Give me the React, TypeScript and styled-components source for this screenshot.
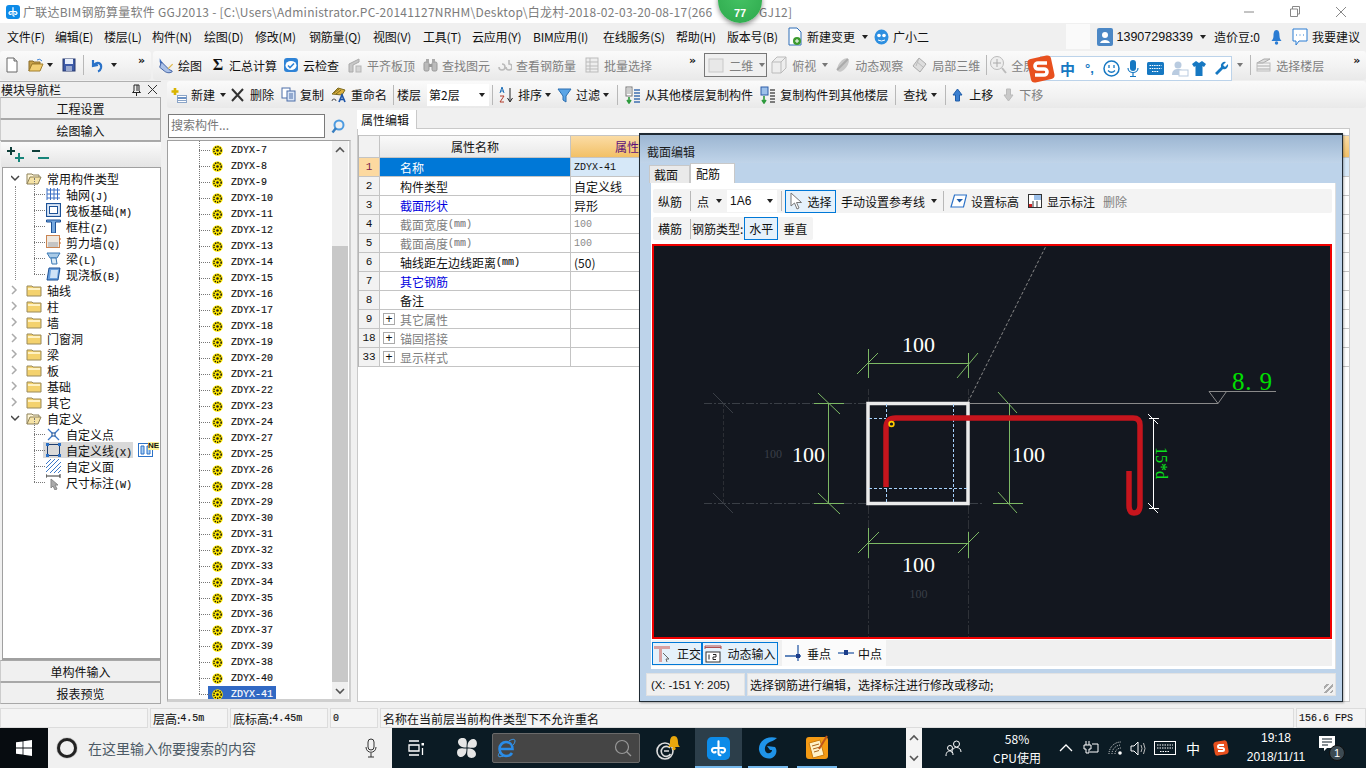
import React from "react";
import styled, { createGlobalStyle, css } from "styled-components";

const Global = createGlobalStyle`
  html, body { margin: 0; padding: 0; background: #f0f0f0; }
  * { box-sizing: border-box; }
  body { font-family: "Noto Sans CJK SC", "Liberation Sans", sans-serif; font-size: 12px; color: #111; }
`;

const CJK = `"Noto Sans CJK SC", "Liberation Sans", sans-serif`;
const MONO = `"Liberation Mono", "Noto Sans CJK SC", monospace`;

const Page = styled.div`
  position: relative; width: 1366px; height: 768px; overflow: hidden;
  display: flex; flex-direction: column; background: #f0f0f0;
`;

/* ---------- title bar ---------- */
const TitleBar = styled.div`
  height: 23px; flex: none; background: #fff; display: flex; align-items: center;
  padding-left: 6px; color: #7c7c7c; font-size: 12px; white-space: nowrap;
`;
const TitleText = styled.span` margin-left: 3px; width: 736px; flex: none; letter-spacing: 0.24px; `;
const TitleTail = styled.span` flex: 1; letter-spacing: 0.24px; `;
const WinControls = styled.div` display: flex; align-items: center; gap: 36px; padding-right: 20px; height: 100%; `;
const Badge = styled.div`
  position: absolute; left: 718px; top: -21px; width: 44px; height: 44px; border-radius: 50%;
  background: radial-gradient(circle at 50% 40%, #44c263, #2da84c); box-shadow: 0 2px 5px rgba(0,0,0,.45);
  color: #fff; font: bold 11px "Liberation Sans", sans-serif; display: flex; align-items: flex-end;
  justify-content: center; padding-bottom: 4px;
`;

/* ---------- menu ---------- */
const MenuBar = styled.div`
  height: 27px; flex: none; background: #f0f0f0; display: flex; align-items: center; padding-left: 7px; white-space: nowrap;
`;
const MenuItem = styled.span<{ $w: number }>` width: ${p => p.$w}px; flex: none; font-size: 12px; letter-spacing: -0.2px; `;
const MenuSpring = styled.div` flex: 1; `;
const WhitePatch = styled.div` width: 24px; height: 25px; background: #fafafa; margin-right: 7px; `;
const MenuRight = styled.div` display: flex; align-items: center; gap: 4px; padding-right: 6px; `;
const Phone = styled.span` font-family: "Liberation Sans", sans-serif; font-size: 12.5px; `;

/* ---------- generic tool strip pieces ---------- */
const Strip = styled.div`
  display: flex; align-items: center; white-space: nowrap; border-radius: 3px;
  background: linear-gradient(#fafafa, #f2f2f2 55%, #e9e9e9);
`;
const MainStrip = styled.div`
  height: 30px; flex: none; display: flex; align-items: center; white-space: nowrap; background: #f0f0f0;
`;
const Tool = styled.span<{ $ml?: number; $off?: boolean }>`
  display: inline-flex; align-items: center; gap: 4px; flex: none; font-size: 12px;
  margin-left: ${p => p.$ml ?? 0}px; color: ${p => (p.$off ? "#808080" : "#111")};
`;
const SigmaGlyph = styled.span` font: bold 16px "Liberation Serif", serif; color: #111; width: 14px; text-align: center; `;
const Sep = styled.i<{ $ml?: number; $h?: number }>`
  display: block; flex: none; width: 1px; height: ${p => p.$h ?? 20}px; background: #b8b8b8; margin-left: ${p => p.$ml ?? 0}px;
`;
const Arrow = styled.i<{ $ml?: number; $off?: boolean }>`
  display: block; flex: none; width: 0; height: 0; border: 3px solid transparent; border-top: 4px solid ${p => (p.$off ? "#777" : "#222")};
  border-bottom: 0; margin-left: ${p => p.$ml ?? 0}px;
`;
const Chevrons = styled.span<{ $ml?: number }>`
  flex: none; font: bold 11px "DejaVu Sans", sans-serif; margin-left: ${p => p.$ml ?? 0}px; margin-top: -10px;
`;
const GroupA = styled(Strip)` width: 151px; height: 29px; margin-right: 2px; padding-left: 5px; `;
const GroupB = styled(Strip)` flex: 1; height: 29px; padding-left: 4px; `;
const ComboBox = styled.div`
  width: 63px; height: 24px; margin-left: 8px; border: 1px solid #777; display: flex; align-items: center;
  padding-left: 3px; gap: 4px; color: #808080; flex: none; background: #f0f0f0;
`;

/* ---------- workspace ---------- */
const Workspace = styled.div` flex: 1; display: flex; min-height: 0; `;
const LeftPanel = styled.div` width: 163px; flex: none; display: flex; flex-direction: column; padding: 1px 2px 3px 0; `;
const NavHead = styled.div`
  height: 16px; flex: none; display: flex; align-items: center; border-top: 1px solid #b0b0b0; padding: 0 4px 0 1px; font-size: 12px;
`;
const NavTitle = styled.span` flex: 1; `;
const NavBtn = styled.div`
  height: 22px; flex: none; display: flex; align-items: center; justify-content: center; font-size: 12px;
  background: #f0f0f0; border: 1px solid #a8a8a8; border-left-color: #ccc;
`;
const TreeTools = styled.div`
  height: 26px; flex: none; padding-left: 6px; display: flex; align-items: center; gap: 6px;
  background: linear-gradient(#fbfbfb, #e4e4e4); border-top: 1px solid #aaa; margin-left: 1px;
`;
const Tree = styled.div`
  flex: 1; min-height: 0; margin-left: 2px; background: #fff; border: 1px solid #a0a0a0; border-bottom-width: 2px; padding-top: 2px; position: relative;
`;
const TreeRow = styled.div<{ $child?: boolean }>`
  position: relative; height: 16px; display: flex; align-items: center; white-space: nowrap; font-size: 12px;
  padding-left: ${p => (p.$child ? 43 : 8)}px; gap: 5px;
  ${p => p.$child && css`
    &::before { content: ""; position: absolute; left: 31px; top: -8px; height: 16px; width: 0; border-left: 1px dotted #777; }
    &::after { content: ""; position: absolute; left: 31px; top: 8px; width: 11px; border-top: 1px dotted #777; }
  `}
`;
const TreeLabel = styled.span` font-size: 12px; line-height: 16px; margin-top: 2px; `;
const Code = styled.span` font: 10px ${MONO}; -webkit-text-stroke: 0.15px currentColor; `;
const SelWrap = styled.span` display: flex; align-items: center; gap: 5px; background: #d9d9d9; margin-left: -3px; padding-left: 3px; padding-right: 1px; height: 16px; `;
const RootGuide = styled.i` position: absolute; left: 12px; top: 18px; height: 94px; width: 0; border-left: 1px dotted #888; `;
const Tag = styled.span`
  position: absolute; left: 145px; top: 0; font: bold 8px "Liberation Sans", sans-serif; color: #111; background: #fff59a; line-height: 8px;
`;

const RightArea = styled.div` flex: 1; min-width: 0; display: flex; flex-direction: column; padding-top: 1px; `;
const Toolstrip = styled(Strip)` height: 27px; flex: none; margin-left: 4px; padding-left: 4px; `;
const FloorSelect = styled.div`
  width: 62px; height: 22px; background: #fff; display: flex; align-items: center; justify-content: space-between;
  margin-left: 6px; padding: 0 4px 0 2px; flex: none;
`;
const Content = styled.div` flex: 1; min-height: 0; display: flex; `;
const ListColumn = styled.div` width: 189px; flex: none; display: flex; flex-direction: column; padding: 6px 3px 5px 2px; margin: 0 3px 0 2px; `;
const SearchRow = styled.div` height: 24px; flex: none; display: flex; padding-left: 1px; margin-bottom: 2px; `;
const SearchInput = styled.div`
  width: 157px; background: #fff; border: 1px solid #7a7a7a; color: #777; padding: 0 0 3px 2px; display: flex; align-items: center; font-size: 12px;
`;
const SearchBtn = styled.div` flex: 1; display: flex; align-items: center; justify-content: center; `;
const ListBox = styled.div`
  flex: 1; min-height: 0; background: #fff; border: 1px solid #a0a0a0; border-bottom: 3px solid #cfcfcf; border-right: 2px solid #cfcfcf; display: flex; overflow: hidden;
`;
const ListBody = styled.div` flex: 1; padding-top: 1px; `;
const ListRow = styled.div`
  position: relative; height: 16px; padding-left: 44px; display: flex; align-items: center;
  &::before { content: ""; position: absolute; left: 31px; top: -8px; height: 16px; border-left: 1px dotted #777; }
  &::after { content: ""; position: absolute; left: 31px; top: 8px; width: 11px; border-top: 1px dotted #777; }
`;
const ListItem = styled.span<{ $sel?: boolean }>`
  display: flex; align-items: center; height: 16px; gap: 8px; padding: 0 3px 0 4px; margin-left: -4px;
  font: 10px ${MONO}; -webkit-text-stroke: 0.15px currentColor;
  color: ${p => (p.$sel ? "#fff" : "#111")}; background: ${p => (p.$sel ? "#3169c4" : "transparent")};
`;
const ScrollBar = styled.div` width: 16px; flex: none; background: #f0f0f0; display: flex; flex-direction: column; align-items: center; margin-right: 1px; `;
const ScrollEnd = styled.div` height: 17px; flex: none; display: flex; align-items: center; justify-content: center; `;
const ScrollThumbGap = styled.div` height: 88px; flex: none; `;
const ScrollThumb = styled.div` flex: 1; width: 100%; background: #c8c8c8; `;

const PropColumn = styled.div` flex: 1; min-width: 0; display: flex; flex-direction: column; padding: 2px 16px 5px 0; `;
const PropTabs = styled.div` height: 19px; flex: none; display: flex; border-bottom: 1px solid #c9c9c9; `;
const PropTab = styled.div`
  width: 60px; background: #fff; border-right: 1px solid #c9c9c9; padding-left: 4px; font-size: 12px; display: flex; align-items: center;
  margin-bottom: -1px;
`;
const PropBody = styled.div` flex: 1; background: #fff; border: 1px solid #c9c9c9; border-top: 0; padding: 6px 0 0 0; `;
const PropTable = styled.div` border-left: 1px solid #b5b5b5; `;
const PropRow = styled.div<{ $head?: boolean }>`
  display: grid; grid-template-columns: 21px 191px 1fr; height: ${p => (p.$head ? 23 : 19)}px; border-bottom: 1px solid #c4c4c4;
  border-top: ${p => (p.$head ? "1px solid #c4c4c4" : "0")};
`;
const RowNo = styled.div<{ $cur?: boolean }>`
  display: flex; align-items: center; justify-content: center; border-right: 1px solid #c4c4c4;
  font: 11px ${MONO}; background: ${p => (p.$cur ? "#fcd9a0" : "#f2f2f2")}; color: ${p => (p.$cur ? "#7a1c4c" : "#111")};
`;
const NameCell = styled.div<{ $tone?: string; $sel?: boolean }>`
  display: flex; align-items: center; padding-left: 20px; border-right: 1px solid #c4c4c4; font-size: 12px; white-space: nowrap;
  color: ${p => (p.$sel ? "#fff" : p.$tone ?? "#111")}; background: ${p => (p.$sel ? "#0078d7" : "#fff")};
`;
const GroupCell = styled(NameCell)` padding-left: 3px; gap: 5px; `;
const PlusBox = styled.i`
  width: 12px; height: 12px; border: 1px solid #aaa; display: flex; align-items: center; justify-content: center; font: 12px "Liberation Sans", sans-serif; color: #111; font-style: normal;
`;
const ValueCell = styled.div<{ $cur?: boolean; $mono?: boolean; $dim?: boolean }>`
  display: flex; align-items: center; padding-left: 3px; font-size: ${p => (p.$mono ? 10 : 12)}px;
  font-family: ${p => (p.$mono ? MONO : CJK)}; color: ${p => (p.$dim ? "#8a8a8a" : "#111")};
  background: ${p => (p.$cur ? "#d6e8f8" : "#fff")};
`;
const HeadName = styled.div`
  display: flex; align-items: center; justify-content: center; border-right: 1px solid #c4c4c4; background: linear-gradient(#fafafa, #e8e8e8); font-size: 12px;
`;
const HeadValue = styled.div`
  display: flex; align-items: center; padding-left: 44px; background: linear-gradient(#fbdca5, #f2c066); color: #5b0f7a; white-space: nowrap; overflow: hidden;
`;
const HeadCorner = styled.div` background: #f2f2f2; border-right: 1px solid #c4c4c4; `;

/* ---------- status ---------- */
const StatusBar = styled.div` height: 21px; flex: none; display: flex; gap: 2px; padding-top: 1px; background: #f0f0f0; `;
const StatusCell = styled.div<{ $w?: number; $fill?: boolean }>`
  ${p => (p.$fill ? "flex: 1;" : `width: ${p.$w}px; flex: none;`)}
  background: #f4f4f4; border: 1px solid #dcdcdc; display: flex; align-items: center; padding-left: 2px; white-space: nowrap; font-size: 12px;
`;

/* ---------- taskbar ---------- */
const Taskbar = styled.div` height: 40px; flex: none; display: flex; align-items: center; background: #0b1b24; color: #fff; position: relative; `;
const StartBtn = styled.div` width: 48px; height: 100%; background: #070c10; display: flex; align-items: center; justify-content: center; flex: none; `;
const TaskSearch = styled.div`
  width: 344px; height: 100%; flex: none; background: #f0f0f0; display: flex; align-items: center; padding-left: 9px; color: #444; font-size: 14px;
`;
const Cortana = styled.i` width: 20px; height: 20px; border-radius: 50%; border: 3px solid #222; flex: none; box-shadow: 0 0 1px #000; `;
const TaskSearchText = styled.span` margin-left: 11px; flex: 1; color: #4c5a66; `;
const MicWrap = styled.span` margin-right: 15px; display: flex; `;
const TaskIconSlot = styled.div<{ $w: number; $ml?: number; $act?: boolean; $bar?: boolean }>`
  position: relative; width: ${p => p.$w}px; margin-left: ${p => p.$ml ?? 0}px; height: 100%; flex: none; display: flex; align-items: center; justify-content: center;
  background: ${p => (p.$act ? "#2c3e4a" : "transparent")};
  ${p => p.$bar && css`&::after { content: ""; position: absolute; left: 0; right: 0; bottom: 0; height: 2px; background: #76b9ed; }`}
`;
const IeBox = styled.div`
  width: 148px; height: 30px; margin-left: 1px; flex: none; background: #454545; border: 1px solid #6a6a6a; border-radius: 2px; display: flex; align-items: center; justify-content: space-between; padding: 0 7px 0 3px;
`;
const ScrollTiles = styled.div` width: 16px; height: 100%; background: #f4f4f4; display: flex; flex-direction: column; align-items: center; justify-content: space-around; margin-left: 69px; flex: none; `;
const CpuBlock = styled.div` width: 84px; margin-left: 12px; flex: none; text-align: center; font-size: 12px; line-height: 19px; color: #fff; `;
const TrayText = styled.span<{ $ml?: number }>` margin-left: ${p => p.$ml ?? 0}px; font-size: 14px; flex: none; `;
const Clock = styled.div` width: 76px; margin-left: 9px; flex: none; text-align: center; font: 12px/19px "Liberation Sans", sans-serif; `;
const NotifyWrap = styled.div` position: relative; margin-left: 5px; flex: none; width: 28px; height: 24px; `;
const NotifyBadge = styled.span`
  position: absolute; left: 10px; top: 9px; width: 16px; height: 16px; border-radius: 50%; background: #3c4a52; border: 1px solid #111; color: #fff; font: 11px/14px "Liberation Sans", sans-serif; text-align: center;
`;

/* ---------- IME ---------- */
const ImeBar = styled.div`
  position: absolute; left: 1040px; top: 56px; width: 192px; height: 25px; background: #fff; border: 1px solid #bcd3ea; display: flex; align-items: center; padding-left: 19px;
`;
const ImeLogo = styled.div` position: absolute; left: -14px; top: -2px; width: 28px; height: 28px; `;
const ImeZh = styled.span` font-weight: 700; font-size: 15px; color: #1678c2; width: 25px; flex: none; `;
const ImeDots = styled.span` font: bold 13px "Liberation Sans", sans-serif; color: #1678c2; width: 18px; flex: none; `;
const ImeSlot = styled.span<{ $w: number }>` width: ${p => p.$w}px; flex: none; display: flex; `;

/* ---------- dialog ---------- */
const Dialog = styled.div`
  position: absolute; left: 639px; top: 133px; width: 704px; height: 569px; background: #bdd3ea; border: 1px solid #1f2a33; border-top-width: 2px;
  box-shadow: 1px 1px 2px rgba(0,0,0,.3); display: flex; flex-direction: column;
`;
const DialogTitle = styled.div`
  height: 28px; flex: none; background: linear-gradient(#9cb6d2, #c0d4e9); padding: 8px 0 0 7px; font-size: 12px; color: #1c1c1c;
`;
const TabRow = styled.div` height: 20px; flex: none; display: flex; align-items: flex-end; padding-left: 9px; `;
const DlgTab = styled.div<{ $on?: boolean }>`
  height: ${p => (p.$on ? 20 : 18)}px; width: ${p => (p.$on ? 45 : 41)}px; background: ${p => (p.$on ? "#fff" : "#eaeaea")};
  border: 1px solid #c8c8c8; border-bottom: 0; display: flex; align-items: center; padding-left: ${p => (p.$on ? 5 : 4)}px; font-size: 12px;
`;
const DlgPanel = styled.div`
  height: 486px; flex: none; margin: 0 6px 0 11px; background: #fff; padding: 6px 3px 0 1px; border-right: 1px solid #ddd; display: flex; flex-direction: column;
`;
const DlgTools = styled.div<{ $w?: number }>`
  height: 24px; flex: none; display: flex; align-items: center; white-space: nowrap; background: #f3f3f3; padding-left: 5px; margin-left: 1px; border-radius: 2px;
  ${p => p.$w && `width: ${p.$w}px;`}
`;
const DlgTools2 = styled(DlgTools)` height: 23px; margin-top: 4px; `;
const BlueBtn = styled.span<{ $w?: number; $ml?: number }>`
  display: inline-flex; align-items: center; justify-content: center; gap: 5px; height: 23px; flex: none; border: 1px solid #0078d7; background: #e5f1fb;
  width: ${p => p.$w ?? 34}px; margin-left: ${p => p.$ml ?? 0}px; font-size: 12px;
`;
const MiniSelect = styled.div`
  width: 50px; height: 22px; background: #fff; display: flex; align-items: center; justify-content: space-between; flex: none; margin-left: 5px; padding: 0 4px 0 3px;
  font: 12px "Liberation Sans", sans-serif;
`;
const Canvas = styled.svg` display: block; flex: none; width: 680px; height: 395px; margin-top: 4px; `;
const SnapRow = styled.div` height: 26px; flex: none; margin-top: 1px; display: flex; align-items: center; background: #f0f0f0; `;
const SnapGroup = styled.div` height: 26px; display: flex; align-items: center; background: #fbfbfb; margin-left: 4px; padding: 0 4px 0 3px; gap: 7px; `;
const DlgStatus = styled.div` height: 23px; flex: none; margin: 4px 6px 0 6px; display: flex; gap: 2px; `;
const DlgStatusCell = styled.div<{ $w?: number; $grip?: boolean }>`
  ${p => (p.$w ? `width: ${p.$w}px; flex: none;` : "flex: 1;")}
  position: relative; background: #f0f0f0; border: 1px solid #e2e2e2; display: flex; align-items: center; padding-left: 2px; font-size: 12px; white-space: nowrap;
  ${p => p.$grip && css`
    &::after { content: ""; position: absolute; right: 2px; bottom: 2px; width: 9px; height: 9px;
      background: repeating-linear-gradient(135deg, transparent 0 2px, #aaa 2px 4px); }
  `}
`;
const Coord = styled.span` font: 11.5px "Liberation Sans", sans-serif; letter-spacing: -0.1px; margin-left: 2px; `;
const CanvasWhite = styled.text` fill: #fff; font: 22px "Liberation Serif", serif; text-anchor: middle; `;
const CanvasFaint = styled.text` fill: #3a3f48; font: 12px "Liberation Serif", serif; text-anchor: middle; `;
const CanvasGreen = styled.text` fill: #00e000; font: 25px "Liberation Serif", serif; `;
const CanvasGreenSm = styled.text` fill: #0be01c; font: 16px "Liberation Serif", serif; text-anchor: middle; `;

/* ---------- icons ---------- */
const Svg = ({ w = 16, h = 16, vb, children }: { w?: number; h?: number; vb?: string; children: React.ReactNode }) => (
  <svg width={w} height={h} viewBox={vb ?? `0 0 ${w} ${h}`} style={{ flex: "none", display: "block" }}>{children}</svg>
);

const AppLogo = ({ s = 14 }: { s?: number }) => (
  <Svg w={s} h={s} vb="0 0 24 24">
    <rect width="24" height="24" rx="5" fill="#0d8be8" />
    <path d="M12 4.500V17a2 2 0 0 0 2 2M12 11.500H7.500a2.300 2.300 0 1 0 1.500 4M12 11.500h4.500a2.300 2.300 0 1 1-1.500 4" fill="none" stroke="#fff" strokeWidth="2.200" strokeLinecap="round" />
  </Svg>
);
const FileNew = () => (<Svg w={14} h={16}><path d="M2 1h7l3 3v11H2z" fill="#fff" stroke="#666" /><path d="M9 1v3h3" fill="#ddd" stroke="#666" /></Svg>);
const FolderOpenIc = () => (<Svg w={16} h={16}><path d="M1 14V4h4l1 1h6v2H4l-3 7z" fill="#c9a24a" stroke="#8a6d2a" /><path d="M1 14l3-7h11l-3 7z" fill="#f2cf73" stroke="#a27f2c" /><path d="M9 3q3-2 5 1" fill="none" stroke="#3b7fd0" /></Svg>);
const SaveIc = () => (<Svg w={14} h={16}><rect x="1" y="2" width="12" height="12" fill="#3d5aa8" stroke="#26386e" /><rect x="3" y="2" width="8" height="5" fill="#e7eefb" /><rect x="4" y="9" width="6" height="5" fill="#9aa9cf" /></Svg>);
const UndoIc = () => (<Svg w={14} h={16}><path d="M3 3v6l5-1M4 8c3-4 8-2 7 3-.4 1.600-1.500 3-3 3.500" fill="none" stroke="#2a72c8" strokeWidth="2.200" /></Svg>);
const DrawIc = () => (<Svg w={17} h={19} vb="0 0 19 20"><path d="M3 2l5 8-2 3-3-7z" fill="#3b6fc4" /><path d="M5 6l8 8c2 2 4 1 4 3-3 2-7 1-9-1L3 12z" fill="#a9c0e8" stroke="#33569c" /><path d="M12 13l5-5 1 1-5 5z" fill="#e0b84a" /></Svg>);
const CloudCheck = () => (<Svg w={16} h={16}><rect x="1" y="1" width="14" height="14" rx="3" fill="#2f83d6" /><ellipse cx="8" cy="8.500" rx="5.500" ry="4.500" fill="#fff" /><path d="M5 8.500l2 2 4-4" fill="none" stroke="#2f83d6" strokeWidth="1.600" /></Svg>);
const AlignIc = () => (<Svg w={16} h={18}><path d="M2 16V8l10-5v3l-6 3v7z" fill="#c7c7c7" stroke="#aaa" /><rect x="9" y="10" width="5" height="6" fill="#d5d5d5" stroke="#b5b5b5" /></Svg>);
const BinocIc = () => (<Svg w={15} h={16}><rect x="1" y="5" width="5" height="9" rx="1.500" fill="#bbb" stroke="#999" /><rect x="9" y="5" width="5" height="9" rx="1.500" fill="#bbb" stroke="#999" /><rect x="3" y="2" width="3" height="4" fill="#aaa" /><rect x="9" y="2" width="3" height="4" fill="#aaa" /><rect x="6" y="7" width="3" height="3" fill="#999" /></Svg>);
const RebarLook = () => (<Svg w={15} h={14}><path d="M2 9a3 3 0 1 0 3-3M9 9a3 3 0 1 0 3-3V2" fill="none" stroke="#bbb" strokeWidth="1.600" /></Svg>);
const BatchIc = () => (<Svg w={16} h={18}><rect x="2" y="2" width="12" height="14" fill="#eee" stroke="#bbb" /><path d="M2 6h12M2 10h12M2 13h12M6 2v14" stroke="#bbb" /></Svg>);
const BoxFlat = () => (<Svg w={17} h={17}><rect x="1" y="2" width="14" height="13" fill="#e8e8e8" stroke="#c8c8c8" /></Svg>);
const CubeIc = () => (<Svg w={18} h={20}><path d="M2 7l5-5h9v11l-5 5H2z" fill="#eee" stroke="#bbb" /><path d="M2 7h9v11M11 7l5-5" fill="none" stroke="#bbb" /></Svg>);
const OrbitIc = () => (<Svg w={17} h={18}><ellipse cx="9" cy="9" rx="4" ry="8" fill="#c8c8c8" transform="rotate(38 9 9)" /><path d="M3 14L14 3" stroke="#aaa" strokeWidth="2" /></Svg>);
const Local3d = () => (<Svg w={17} h={17}><path d="M8 1l7 6-6 8-7-6z" fill="#ddd" stroke="#aaa" /><path d="M5 4l7 6M8 1L5 9" stroke="#bbb" /></Svg>);
const ZoomAll = () => (<Svg w={18} h={20}><circle cx="8" cy="8" r="6.500" fill="#eee" stroke="#bbb" /><path d="M8 4v8M4 8h8" stroke="#aaa" /><path d="M13 13l4 5" stroke="#bbb" strokeWidth="2" /></Svg>);
const FloorPick = () => (<Svg w={16} h={16}><path d="M1 6l7-4h6L7 6zM1 9h13M1 12h13" fill="#ddd" stroke="#aaa" /><rect x="1" y="6" width="13" height="8" fill="none" stroke="#bbb" /></Svg>);
const NewIc = () => (<Svg w={16} h={16}><path d="M4 1v7M.5 4.500h7" stroke="#d9b400" strokeWidth="2.600" /><rect x="6.500" y="8.500" width="9" height="7" fill="#fff" stroke="#8ba5c8" /><path d="M6.500 11h9" stroke="#6d92c4" strokeWidth="2" /><path d="M6.500 13.500h9" stroke="#8ba5c8" /></Svg>);
const DelX = () => (<Svg w={13} h={14}><path d="M1 1l11 12M12 1L1 13" stroke="#333" strokeWidth="2" /></Svg>);
const CopyIc = () => (<Svg w={15} h={15}><rect x="1" y="1" width="8" height="10" fill="#fff" stroke="#4d6ea8" /><rect x="6" y="4" width="8" height="10" fill="#d8e4f6" stroke="#4d6ea8" /><path d="M8 7h4M8 9h4M8 11h4" stroke="#4d6ea8" /></Svg>);
const RenameIc = () => (<Svg w={17} h={17}><path d="M2 8l6-6 7 2-3 5z" fill="#dcb03a" stroke="#7c6a20" /><path d="M4 7l5-4M6 8l5-4" stroke="#7c6a20" /><path d="M9 16l3-7 3 7M10 13.500h4" fill="none" stroke="#1e55a8" strokeWidth="1.700" /><path d="M2 15a2 2 0 1 1 4 0" fill="none" stroke="#555" /></Svg>);
const SortIc = () => (<Svg w={16} h={18}><path d="M2 7l2-6 2 6M2.800 5h2.400" fill="none" stroke="#1d6fb8" /><path d="M2 10h4l-4 6h4" fill="none" stroke="#b23b2a" /><path d="M12 2v13M9.500 12l2.500 4 2.500-4" fill="none" stroke="#222" /></Svg>);
const FilterIc = () => (<Svg w={15} h={16}><path d="M1 2h13L9 9v6l-3-2V9z" fill="#5ba5e6" stroke="#2c6fb0" /></Svg>);
const FloorCopy = () => (<Svg w={16} h={18}><rect x="1" y="1" width="6" height="9" fill="#fff" stroke="#777" /><path d="M2 3h4M2 5h4M2 7h4" stroke="#999" /><path d="M4 11v5M2 14l2 3 2-3" fill="none" stroke="#2d9a3c" strokeWidth="1.600" /><path d="M9 4h6M9 7h6M9 10h6M9 13h6M9 16h6" stroke="#3f6fb0" strokeWidth="1.500" /></Svg>);
const FloorCopy2 = () => (<Svg w={16} h={18}><rect x="1" y="1" width="7" height="8" fill="#9cc0ea" stroke="#2c5ca8" /><path d="M4 10v6M2 14l2 3 2-3" fill="none" stroke="#2d9a3c" strokeWidth="1.600" /><path d="M10 4h5M10 7h5M10 10h5M10 13h5M10 16h5" stroke="#555" strokeWidth="1.500" /></Svg>);
const UpIc = () => (<Svg w={11} h={14}><path d="M5.500 1L10 7H7.500v6h-4V7H1z" fill="#3b7fd0" stroke="#1f5ca8" /></Svg>);
const DownIc = () => (<Svg w={11} h={14}><path d="M5.500 13L10 7H7.500V1h-4v6H1z" fill="#c9c9c9" stroke="#bbb" /></Svg>);
const NewChange = () => (<Svg w={16} h={20}><path d="M2 1h8l4 4v13H2z" fill="#fff" stroke="#2f6fb8" /><circle cx="10" cy="14" r="4" fill="#3d9a2e" /><path d="M10 12v4M8 14h4" stroke="#fff" /></Svg>);
const Mascot = () => (<Svg w={15} h={16}><ellipse cx="7.500" cy="8" rx="7" ry="7.500" fill="#2d8fe0" /><circle cx="5" cy="6.500" r="1.800" fill="#fff" /><circle cx="10" cy="6.500" r="1.800" fill="#fff" /><path d="M4 11q3.500 2 7 0" fill="none" stroke="#fff" /></Svg>);
const Avatar = () => (<Svg w={16} h={18}><rect width="16" height="18" rx="2" fill="#4b87c5" /><circle cx="8" cy="7" r="3" fill="#fff" /><path d="M3 15c1-4 9-4 10 0z" fill="#fff" /></Svg>);
const BellIc = ({ c = "#2b7cd3" }: { c?: string }) => (<Svg w={11} h={16}><path d="M5.500 1C3 1 2.500 4 2.500 7S1 11 .5 12h10C10 11 8.500 10 8.500 7S8 1 5.500 1z" fill={c} /><circle cx="5.500" cy="14" r="1.700" fill={c} /></Svg>);
const Suggest = () => (<Svg w={16} h={18}><path d="M1 1h14v12H7l-3 4v-4H1z" fill="#fff" stroke="#2b7cd3" /><path d="M4 7h1M7.500 7h1M11 7h1" stroke="#2b7cd3" /></Svg>);
const Pin = () => (<Svg w={11} h={12}><path d="M3 1h5v6l1.500 1.500h-8L3 7zM5.500 8v4M6 1v6" fill="none" stroke="#222" /></Svg>);
const CloseSm = () => (<Svg w={9} h={9}><path d="M0 0l9 9M9 0L0 9" stroke="#333" /></Svg>);
const ExpandAll = () => (<Svg w={19} h={18}><path d="M4 1v8M0 5h8" stroke="#0f3f3a" strokeWidth="2" /><path d="M12 7v9M8 12h9" stroke="#17857a" strokeWidth="2" /></Svg>);
const CollapseAll = () => (<Svg w={19} h={14}><path d="M0 3h8" stroke="#0f3f3a" strokeWidth="2" /><path d="M6 10h11" stroke="#17857a" strokeWidth="2" /></Svg>);
const Chev = ({ open }: { open?: boolean }) => (<Svg w={10} h={10}>{open ? <path d="M0 3l4 4 4-4" fill="none" stroke="#444" strokeWidth="1.500" /> : <path d="M1 1l4 4-4 4" fill="none" stroke="#aaa" strokeWidth="1.500" />}</Svg>);
const FolderIc = ({ open }: { open?: boolean }) => open ? (
  <Svg w={16} h={13}><path d="M1 12V2h5l1 1h6v2" fill="#fff6d8" stroke="#8e8158" /><path d="M1 12l3-7h11l-3 7z" fill="#f6e3a6" stroke="#8e8158" /></Svg>
) : (
  <Svg w={16} h={13}><path d="M1 12V2h5l1 1h8v9z" fill="#f4d26e" stroke="#9a8a5a" /><rect x="2" y="4" width="12" height="2" fill="#fff2c4" /></Svg>
);
const GridIc = () => (<Svg w={15} h={14}><path d="M1 1v12M4.500 1v12M8 1v12M11.500 1v12M1 3h13M1 7h13M1 11h13" stroke="#3b6fc4" fill="none" /></Svg>);
const RaftIc = () => (<Svg w={15} h={14}><rect x=".5" y=".5" width="14" height="13" fill="#dbe7f7" stroke="#1c5196" strokeWidth="1.200" /><rect x="3.500" y="3.500" width="8" height="7" fill="#fff" stroke="#1c5196" /></Svg>);
const ColumnIc = () => (<Svg w={15} h={14}><path d="M.5 1h14v2H9.500v11h-4V3H.5z" fill="#76a8de" stroke="#1c5196" /></Svg>);
const WallIc = () => (<Svg w={15} h={14}><rect x=".5" y=".5" width="13" height="12" fill="#efe8df" stroke="#c98452" /><rect x="2" y="7" width="10" height="5" fill="#c4c4c4" /><path d="M13 4h2M13 8h2" stroke="#d0661c" /></Svg>);
const BeamIc = () => (<Svg w={15} h={14}><path d="M1 2h13l-3 5h-7z" fill="#a9cbe8" stroke="#3b78b4" /><path d="M5 7h5l1 6H6z" fill="#d9eaf7" stroke="#3b78b4" /></Svg>);
const SlabIc = () => (<Svg w={15} h={14}><path d="M3 1h11l-2 12H1z" fill="#6aa0de" stroke="#1c5196" /><path d="M5 3h7l-1 8H4z" fill="#cfe2f7" /></Svg>);
const PointIc = () => (<Svg w={15} h={13}><path d="M2 1l11 11M13 1L2 12" stroke="#3b78c8" strokeWidth="1.300" /><rect x="6" y="5" width="3" height="3" fill="#fff" stroke="#1c5196" /></Svg>);
const LineIc = () => (<Svg w={15} h={14}><rect x="1.500" y="1.500" width="12" height="11" fill="none" stroke="#1f3e70" /><path d="M0 0h3v3H0zM12 0h3v3h-3zM0 11h3v3H0zM12 11h3v3h-3z" fill="#2d73c8" /></Svg>);
const AreaIc = () => (<Svg w={15} h={14}><path d="M0 5l5-5M0 9l9-9M0 13L13 0M4 14L15 3M8 14l7-7M12 14l3-3" stroke="#3b78c8" /></Svg>);
const DimIc = () => (<Svg w={15} h={16}><path d="M0 2h14M0 0v4M14 0v4" stroke="#333" /><path d="M5 5l7 6-3 0 2 4-2 1-2-4-2 2z" fill="#aaa" stroke="#888" /></Svg>);
const Layout3 = () => (<Svg w={15} h={14}><rect x=".5" y=".5" width="14" height="13" fill="#fff" stroke="#2d73c8" /><path d="M3 3h3v8H3zM9 3h3v8H9z" fill="#a8cdf2" stroke="#2d73c8" /></Svg>);
const GearDot = () => (
  <Svg w={11} h={11} vb="0 0 12 12">
    <circle cx="6" cy="6" r="5.800" fill="#ffe800" />
    <circle cx="6" cy="6" r="4" fill="none" stroke="#111" strokeWidth="1.600" strokeDasharray="1.500 1.100" />
    <circle cx="6" cy="6" r="1.400" fill="#222" />
  </Svg>
);
const SearchIc = () => (<Svg w={14} h={15}><circle cx="8" cy="6" r="4.500" fill="none" stroke="#4d9be0" strokeWidth="2" /><path d="M5 9L1.500 13.500" stroke="#3a7fc0" strokeWidth="2.400" /></Svg>);
const UpChev = () => (<Svg w={10} h={8}><path d="M1 6l4-4 4 4" fill="none" stroke="#555" strokeWidth="1.600" /></Svg>);
const DownChev = () => (<Svg w={10} h={8}><path d="M1 2l4 4 4-4" fill="none" stroke="#555" strokeWidth="1.600" /></Svg>);
const PointerIc = () => (<Svg w={13} h={18}><path d="M1 1l0 13 3.500-3 2.500 6 2-1-2.500-5.500 5 0z" fill="#fff" stroke="#777" /></Svg>);
const ElevIc = () => (<Svg w={17} h={16}><path d="M4.500 2h12l-3 12H1z" fill="#fff" stroke="#2d73c8" strokeWidth="1.200" /><path d="M6.500 6h6.500l-3.500 3.500z" fill="#1f5ca8" /></Svg>);
const ShowDim = () => (<Svg w={16} h={16}><rect x="1.500" y="1.500" width="13" height="13" fill="#fff" stroke="#333" /><rect x="7" y="2" width="7" height="5" fill="#9cc0ea" /><path d="M6 8v6M10 8v6" stroke="#333" /><rect x="2" y="11" width="3" height="3" fill="#d02020" /></Svg>);
const OrthoIc = () => (<Svg w={19} h={19}><path d="M1 2h16v3H1zM6 5h3v13H6z" fill="#d9a0a0" /><path d="M10 9l6 6-3 0 1 3" fill="none" stroke="#666" /></Svg>);
const DynIc = () => (<Svg w={18} h={19}><path d="M1 5V2h16v3M1 3.500h16" fill="none" stroke="#b05050" /><rect x="2" y="8" width="14" height="10" fill="#fff" stroke="#333" /><path d="M5 10.500v5M9 10.500h3v2.500h-3v2.500h3" fill="none" stroke="#222" /></Svg>);
const PerpIc = () => (<Svg w={18} h={18}><path d="M0 12h16M13 1v16" stroke="#2d5fa8" strokeWidth="1.300" /><rect x="11" y="10" width="4" height="4" fill="#1c3d8a" /></Svg>);
const MidIc = () => (<Svg w={16} h={8}><path d="M0 4h16" stroke="#2d5fa8" strokeWidth="1.300" /><rect x="6" y="1" width="4" height="5" fill="#1c3d8a" /></Svg>);
const WinLogo = () => (<Svg w={16} h={16}><path d="M0 2.300L6.600 1.400V7.500H0zM7.400 1.300L16 0V7.500H7.400zM0 8.400H6.600V14.600L0 13.700zM7.400 8.400H16V16L7.400 14.700z" fill="#fff" /></Svg>);
const MicIc = () => (<Svg w={12} h={20}><rect x="3" y="1" width="6" height="11" rx="3" fill="none" stroke="#333" /><path d="M1 9c0 7 10 7 10 0M6 15v4M3 19h6" fill="none" stroke="#333" /></Svg>);
const TaskView = () => (<Svg w={16} h={16}><path d="M1 1h10M1 15h10M1 5h10v6H1z" fill="none" stroke="#fff" strokeWidth="1.300" /><rect x="13.500" y="3" width="2.500" height="2.500" fill="#fff" /><path d="M14.500 8v7" stroke="#fff" strokeWidth="1.300" /></Svg>);
const Petal = ({ r }: { r: number }) => (<path transform={`rotate(${r} 11 11)`} d="M10.500 10.500C10.500 7 11.500 5 10 2.500 8.500 .5 4 .5 2.500 3S3 9 6 10c2 .6 3.500.5 4.500.5z" fill="#e6e6e6" />);
const FanIc = () => (<Svg w={22} h={22}><Petal r={0} /><Petal r={90} /><Petal r={180} /><Petal r={270} /></Svg>);
const IeIc = () => (<Svg w={20} h={20}><path d="M3.500 11h13c0-4.500-3-7-6.500-7S3.500 7 3.500 11s3 7 6.500 7c3 0 5-1.200 6-3" fill="none" stroke="#2a8ce8" strokeWidth="2.600" /><path d="M4 14C1 18 2 20 7 18M13 3c3-2 6-2.500 6 0 0 1.500-1 3-2 4" fill="none" stroke="#3b9cf0" /></Svg>);
const MagnGray = () => (<Svg w={18} h={18}><circle cx="8" cy="8" r="6.500" fill="none" stroke="#999" strokeWidth="1.200" /><path d="M12.500 12.500L17 17" stroke="#999" strokeWidth="1.300" /></Svg>);
const SwirlIc = () => (<Svg w={30} h={28}><circle cx="10" cy="17" r="8" fill="none" stroke="#ddd" strokeWidth="1.600" /><path d="M15 14a5 5 0 1 0 .5 6M14 17H9" fill="none" stroke="#ddd" strokeWidth="1.600" /><path d="M19 2c-3 0-4 3-4 6s-1 4-2 5h12c-1-1-2-2-2-5s-1-6-4-6z" fill="#e8a70c" /><circle cx="19" cy="14.500" r="1.700" fill="#e8a70c" /></Svg>);
const GIcon = () => (<Svg w={24} h={26}><path d="M21 3C10 0 2 7 3 15c1 6 7 10 13 8 4-2 6-7 3-11l-8-1 3 4h2c0 2-2 4-5 3-3-2-3-7 1-10 3-2 6-2 9-5z" fill="#1f93e8" /></Svg>);
const NoteIc = () => (<Svg w={24} h={26}><rect x="1" y="2" width="22" height="22" rx="3" fill="#f49a14" /><path d="M4 8l11-3 4 15-11 3z" fill="#fff2c8" stroke="#c97b0c" /><path d="M7 11l7-2M8 14l7-2M9 17l5-1.500" stroke="#a9641a" /><path d="M14 14L22 1" stroke="#c0561a" strokeWidth="2" /></Svg>);
const PeopleIc = () => (<Svg w={17} h={18}><circle cx="11.500" cy="5" r="3" fill="none" stroke="#fff" /><path d="M7 14c0-4 2-5.500 4.500-5.500S16 10 16 13" fill="none" stroke="#fff" /><circle cx="5" cy="9" r="2.500" fill="none" stroke="#fff" /><path d="M1 17c0-4 2-5 4-5s3 1 3 4" fill="none" stroke="#fff" /></Svg>);
const Caret = () => (<Svg w={14} h={10}><path d="M1 8l6-6 6 6" fill="none" stroke="#fff" strokeWidth="1.300" /></Svg>);
const BatIc = () => (<Svg w={16} h={14}><path d="M3 0v4M6 0v4M1 4h7v4H6v4H3V8H1zM9 3h6v8H7" fill="none" stroke="#fff" /></Svg>);
const WifiIc = () => (<Svg w={15} h={15}><path d="M1 13a12 12 0 0 1 12-12M4 13a9 9 0 0 1 9-9M7 13a6 6 0 0 1 6-6" fill="none" stroke="#ddd" strokeDasharray="1 1" /><circle cx="12" cy="12" r="1.800" fill="#fff" /></Svg>);
const SpeakerIc = () => (<Svg w={16} h={15}><path d="M1 5h3l4-4v13l-4-4H1z" fill="none" stroke="#fff" /><path d="M11 4q2 3.500 0 7M13.500 2q3 5.500 0 11" fill="none" stroke="#bbb" /></Svg>);
const KbdIc = () => (<Svg w={22} h={16}><rect x=".5" y="1.500" width="21" height="13" fill="none" stroke="#fff" /><path d="M3 5h16M3 8h16M6 11.500h10" stroke="#fff" strokeDasharray="1.500 1" /></Svg>);
const SougouSm = () => (<Svg w={16} h={16}><rect x="1" y="1" width="14" height="14" rx="3" fill="#e8501e" transform="rotate(-10 8 8)" /><path d="M11 5H6.500a1.500 1.500 0 0 0 0 3h3a1.500 1.500 0 0 1 0 3H5" fill="none" stroke="#fff" strokeWidth="2" /></Svg>);
const NotifyIc = () => (<Svg w={16} h={16}><path d="M0 0h16v12H8l-3 3v-3H0z" fill="#fff" /><path d="M3 3h10M3 6h10M3 9h6" stroke="#0b1b24" /></Svg>);

const SmileIc = () => (<Svg w={17} h={17}><circle cx="8.500" cy="8.500" r="7.500" fill="none" stroke="#1678c2" strokeWidth="1.500" /><path d="M6 5v3M11 5v3M5 10.500q3.500 3.500 7 0" fill="none" stroke="#1678c2" strokeWidth="1.300" /></Svg>);
const ImeMic = () => (<Svg w={12} h={17}><rect x="3" y="0" width="6" height="11" rx="3" fill="#1678c2" /><path d="M1 8c0 6 10 6 10 0M6 13v3M3 16.500h6" fill="none" stroke="#1678c2" strokeWidth="1.200" /></Svg>);
const ImeKbd = () => (<Svg w={17} h={15}><rect x="0" y="1" width="17" height="13" rx="1.500" fill="#1678c2" /><path d="M2.500 4.500h12M2.500 7.500h12M5 10.500h7" stroke="#fff" strokeDasharray="1.500 .8" /></Svg>);
const ImeUser = () => (<Svg w={18} h={17}><circle cx="7" cy="5" r="3.500" fill="#b9cbe0" /><path d="M1 15c0-5 3-6 6-6s6 1 6 6z" fill="#b9cbe0" /><rect x="8" y="10" width="9" height="6" fill="#fff" stroke="#b9cbe0" /></Svg>);
const ImeShirt = () => (<Svg w={14} h={15}><path d="M4 0L0 3l2 3 1.500-1v10h7V5L12 6l2-3-4-3-3 2z" fill="#1678c2" /></Svg>);
const ImeWrench = () => (<Svg w={15} h={15}><path d="M14 3l-3 3-2-2 3-3a4 4 0 0 0-5 5L1 12l2 2 6-6a4 4 0 0 0 5-5z" fill="#1678c2" /></Svg>);

/* ---------- data ---------- */
const MENUS: [string, number][] = [
  ["文件(F)", 48], ["编辑(E)", 49], ["楼层(L)", 48], ["构件(N)", 52], ["绘图(D)", 51], ["修改(M)", 54], ["钢筋量(Q)", 64], ["视图(V)", 50],
  ["工具(T)", 49], ["云应用(Y)", 61], ["BIM应用(I)", 70], ["在线服务(S)", 73], ["帮助(H)", 51], ["版本号(B)", 60],
];
const IDS = ["7","8","9","10","11","12","13","14","15","16","17","18","19","20","21","22","23","24","27","25","26","28","29","30","31","32","33","34","35","36","37","39","38","40","41"];

const GREEN = "#7cb864";
const DARK = "#3a3f46";
const Ln = ({ d, c = GREEN, w = 1, dash }: { d: string; c?: string; w?: number; dash?: string }) => (
  <path d={d} fill="none" stroke={c} strokeWidth={w} strokeDasharray={dash} shapeRendering="crispEdges" />
);

const Drawing = () => (
  <Canvas viewBox="652 244 680 395">
    <rect x="653" y="245" width="678" height="393" fill="#13171f" stroke="#f00000" strokeWidth="2" />
    <Ln c="#2f3238" d="M868.500 389V402M968.500 389V402" dash="6 2" />
    <Ln c="#2f3238" d="M868.500 505V637M968.500 505V637" dash="9 2 2 2" />
    <Ln c={DARK} d="M704 403.500H814M844 403.500H868M704 503.500H814M844 503.500H868M970 503.500H983" dash="8 2 2 2" />
    <Ln c="#2b2e34" d="M723.500 403V503" dash="4 2" />
    <path d="M713 393L733 413M713 493L733 513" stroke={DARK} fill="none" />
    <path d="M968 402L1046 246" stroke="#8a8a8a" strokeDasharray="3 2" fill="none" />
    <Ln d="M868.500 363H968.500M868.500 349V378M968.500 353V378M868.500 543H968.500M868.500 528V558M968.500 532V558" />
    <path d="M857 374L878 353M957 378L978 353M858 553L879 532M958 553L979 532" stroke={GREEN} fill="none" />
    <Ln d="M828.500 403V503M814 403.500H844M814 503.500H844M1009.500 403V503M993 503.500H1023" />
    <path d="M818 393L840 414M818 493L840 514M998 392L1017 413M998 492L1017 513" stroke={GREEN} fill="none" />
    <Ln c="#8a8a8a" d="M970 403.500H1218M1209 391.500H1276" />
    <path d="M1209 391.500L1226.500 391.500L1218 403.500Z" stroke="#8a8a8a" fill="none" />
    <CanvasGreen x="1232" y="390" textLength="40">8. 9</CanvasGreen>
    <rect x="868" y="403.500" width="100" height="100" fill="none" stroke="#ececec" strokeWidth="3.500" />
    <Ln c="#a9d4ff" d="M886.500 404V504M953.500 404V504M869 488.500H968M869 418.500H886" dash="3 2" w={1} />
    <path d="M886 487V428Q886 418 896 418H1133Q1140 418 1140 425V505Q1140 513 1134 513Q1129 513 1129 505V471" fill="none" stroke="#c6151d" strokeWidth="5.500" />
    <circle cx="891.500" cy="424" r="2.400" fill="#13171f" stroke="#ffcc00" strokeWidth="1.600" />
    <Ln c="#fff" d="M1153.500 418V508M1149 418.500H1159M1149 508.500H1159" />
    <path d="M1148 414L1158 424M1148 503L1158 513" stroke="#fff" fill="none" />
    <CanvasGreenSm transform="translate(1156 463) rotate(90)">15*d</CanvasGreenSm>
    <CanvasWhite x="918.500" y="352">100</CanvasWhite>
    <CanvasWhite x="918.500" y="572">100</CanvasWhite>
    <CanvasWhite x="808.500" y="462">100</CanvasWhite>
    <CanvasWhite x="1028.500" y="462">100</CanvasWhite>
    <CanvasFaint x="773" y="458">100</CanvasFaint>
    <CanvasFaint x="918.500" y="598">100</CanvasFaint>
  </Canvas>
);

const ROOTS1 = ["轴线", "柱", "墙", "门窗洞", "梁", "板", "基础", "其它"];

export default function App() {
  return (
    <Page>
      <Global />
      <TitleBar>
        <AppLogo />
        <TitleText>广联达BIM钢筋算量软件 GGJ2013 - [C:\Users\Administrator.PC-20141127NRHM\Desktop\白龙村-2018-02-03-20-08-17(266</TitleText>
        <TitleTail>GJ12]</TitleTail>
        <WinControls>
          <Svg w={10} h={10}><path d="M0 5h10" stroke="#888" /></Svg>
          <Svg w={10} h={11}><path d="M.5 3h7v7.500h-7zM2.500 3V.500h7V8H8" fill="none" stroke="#888" /></Svg>
          <Svg w={10} h={10}><path d="M0 0l10 10M10 0L0 10" stroke="#888" /></Svg>
        </WinControls>
      </TitleBar>
      <Badge>77</Badge>

      <MenuBar>
        {MENUS.map(([t, w]) => <MenuItem key={t} $w={w}>{t}</MenuItem>)}
        <Tool><NewChange />新建变更</Tool>
        <Arrow $ml={7} />
        <Tool $ml={6}><Mascot />广小二</Tool>
        <MenuSpring />
        <WhitePatch />
        <MenuRight>
          <Avatar />
          <Phone>13907298339</Phone>
          <Arrow $ml={3} />
          <Tool $ml={4}>造价豆:0</Tool>
          <Tool $ml={7}><BellIc /></Tool>
          <Tool $ml={6}><Suggest />我要建议</Tool>
        </MenuRight>
      </MenuBar>

      <MainStrip>
        <GroupA>
          <FileNew />
          <Tool $ml={9}><FolderOpenIc /></Tool>
          <Arrow $ml={3} />
          <Tool $ml={9}><SaveIc /></Tool>
          <Sep $ml={7} />
          <Tool $ml={6}><UndoIc /></Tool>
          <Arrow $ml={7} />
          <Chevrons $ml={21}>»</Chevrons>
        </GroupA>
        <GroupB>
          <Tool><DrawIc />绘图</Tool>
          <Tool $ml={9}><SigmaGlyph>Σ</SigmaGlyph>汇总计算</Tool>
          <Tool $ml={6}><CloudCheck />云检查</Tool>
          <Tool $ml={8} $off><AlignIc />平齐板顶</Tool>
          <Tool $ml={8} $off><BinocIc />查找图元</Tool>
          <Tool $ml={7} $off><RebarLook />查看钢筋量</Tool>
          <Tool $ml={8} $off><BatchIc />批量选择</Tool>
          <Chevrons $ml={37}>»</Chevrons>
          <ComboBox><BoxFlat />二维<Arrow $ml={2} $off /></ComboBox>
          <Tool $ml={3} $off><CubeIc />俯视</Tool>
          <Arrow $ml={6} $off />
          <Tool $ml={6} $off><OrbitIc />动态观察</Tool>
          <Tool $ml={8} $off><Local3d />局部三维</Tool>
          <Sep $ml={6} />
          <Tool $ml={2} $off><ZoomAll />全屏</Tool>
          <Arrow $ml={202} $off />
          <Sep $ml={7} />
          <Tool $ml={5} $off><FloorPick />选择楼层</Tool>
          <Chevrons $ml={29}>»</Chevrons>
        </GroupB>
      </MainStrip>

      <Workspace>
        <LeftPanel>
          <NavHead>
            <NavTitle>模块导航栏</NavTitle>
            <Pin />
            <Tool $ml={6}><CloseSm /></Tool>
          </NavHead>
          <NavBtn>工程设置</NavBtn>
          <NavBtn>绘图输入</NavBtn>
          <TreeTools><ExpandAll /><CollapseAll /></TreeTools>
          <Tree>
            <RootGuide />
            <TreeRow><Chev open /><FolderIc open />常用构件类型</TreeRow>
            <TreeRow $child><GridIc /><TreeLabel>轴网<Code>(J)</Code></TreeLabel></TreeRow>
            <TreeRow $child><RaftIc /><TreeLabel>筏板基础<Code>(M)</Code></TreeLabel></TreeRow>
            <TreeRow $child><ColumnIc /><TreeLabel>框柱<Code>(Z)</Code></TreeLabel></TreeRow>
            <TreeRow $child><WallIc /><TreeLabel>剪力墙<Code>(Q)</Code></TreeLabel></TreeRow>
            <TreeRow $child><BeamIc /><TreeLabel>梁<Code>(L)</Code></TreeLabel></TreeRow>
            <TreeRow $child><SlabIc /><TreeLabel>现浇板<Code>(B)</Code></TreeLabel></TreeRow>
            {ROOTS1.map(t => <TreeRow key={t}><Chev /><FolderIc />{t}</TreeRow>)}
            <TreeRow><Chev open /><FolderIc open />自定义</TreeRow>
            <TreeRow $child><PointIc /><TreeLabel>自定义点</TreeLabel></TreeRow>
            <TreeRow $child>
              <SelWrap><LineIc /><TreeLabel>自定义线<Code>(X)</Code></TreeLabel></SelWrap>
              <Layout3 />
              <Tag>NE</Tag>
            </TreeRow>
            <TreeRow $child><AreaIc /><TreeLabel>自定义面</TreeLabel></TreeRow>
            <TreeRow $child><DimIc /><TreeLabel>尺寸标注<Code>(W)</Code></TreeLabel></TreeRow>
          </Tree>
          <NavBtn>单构件输入</NavBtn>
          <NavBtn>报表预览</NavBtn>
        </LeftPanel>

        <RightArea>
          <Toolstrip>
            <Tool><NewIc />新建</Tool>
            <Arrow $ml={5} />
            <Tool $ml={5}><DelX /></Tool>
            <Tool $ml={6}>删除</Tool>
            <Tool $ml={7}><CopyIc />复制</Tool>
            <Tool $ml={6}><RenameIc />重命名</Tool>
            <Sep $ml={6} />
            <Tool $ml={3}>楼层</Tool>
            <FloorSelect>第2层<Arrow /></FloorSelect>
            <Sep $ml={3} />
            <Tool $ml={5}><SortIc />排序</Tool>
            <Arrow $ml={3} />
            <Tool $ml={6}><FilterIc />过滤</Tool>
            <Arrow $ml={3} />
            <Sep $ml={8} />
            <Tool $ml={7}><FloorCopy />从其他楼层复制构件</Tool>
            <Tool $ml={7}><FloorCopy2 />复制构件到其他楼层</Tool>
            <Sep $ml={7} />
            <Tool $ml={7}>查找</Tool>
            <Arrow $ml={4} />
            <Sep $ml={8} />
            <Tool $ml={6}><UpIc /></Tool>
            <Tool $ml={6}>上移</Tool>
            <Tool $ml={10} $off><DownIc /></Tool>
            <Tool $ml={5} $off>下移</Tool>
          </Toolstrip>
          <Content>
            <ListColumn>
              <SearchRow>
                <SearchInput>搜索构件...</SearchInput>
                <SearchBtn><SearchIc /></SearchBtn>
              </SearchRow>
              <ListBox>
                <ListBody>
                  {IDS.map(id => (
                    <ListRow key={id}>
                      <ListItem $sel={id === "41"}><GearDot />ZDYX-{id}</ListItem>
                    </ListRow>
                  ))}
                </ListBody>
                <ScrollBar>
                  <ScrollEnd><UpChev /></ScrollEnd>
                  <ScrollThumbGap />
                  <ScrollThumb />
                  <ScrollEnd><DownChev /></ScrollEnd>
                </ScrollBar>
              </ListBox>
            </ListColumn>
            <PropColumn>
              <PropTabs><PropTab>属性编辑</PropTab></PropTabs>
              <PropBody>
                <PropTable>
                  <PropRow $head><HeadCorner /><HeadName>属性名称</HeadName><HeadValue>属性</HeadValue></PropRow>
                  <PropRow><RowNo $cur>1</RowNo><NameCell $sel>名称</NameCell><ValueCell $cur $mono>ZDYX-41</ValueCell></PropRow>
                  <PropRow><RowNo>2</RowNo><NameCell>构件类型</NameCell><ValueCell>自定义线</ValueCell></PropRow>
                  <PropRow><RowNo>3</RowNo><NameCell $tone="#0000e0">截面形状</NameCell><ValueCell>异形</ValueCell></PropRow>
                  <PropRow><RowNo>4</RowNo><NameCell $tone="#808080">截面宽度<Code>(mm)</Code></NameCell><ValueCell $mono $dim>100</ValueCell></PropRow>
                  <PropRow><RowNo>5</RowNo><NameCell $tone="#808080">截面高度<Code>(mm)</Code></NameCell><ValueCell $mono $dim>100</ValueCell></PropRow>
                  <PropRow><RowNo>6</RowNo><NameCell>轴线距左边线距离<Code>(mm)</Code></NameCell><ValueCell>(50)</ValueCell></PropRow>
                  <PropRow><RowNo>7</RowNo><NameCell $tone="#0000e0">其它钢筋</NameCell><ValueCell /></PropRow>
                  <PropRow><RowNo>8</RowNo><NameCell>备注</NameCell><ValueCell /></PropRow>
                  <PropRow><RowNo>9</RowNo><GroupCell $tone="#808080"><PlusBox>+</PlusBox>其它属性</GroupCell><ValueCell /></PropRow>
                  <PropRow><RowNo>18</RowNo><GroupCell $tone="#808080"><PlusBox>+</PlusBox>锚固搭接</GroupCell><ValueCell /></PropRow>
                  <PropRow><RowNo>33</RowNo><GroupCell $tone="#808080"><PlusBox>+</PlusBox>显示样式</GroupCell><ValueCell /></PropRow>
                </PropTable>
              </PropBody>
            </PropColumn>
          </Content>
        </RightArea>
      </Workspace>

      <StatusBar>
        <StatusCell $w={148} />
        <StatusCell $w={78}>层高:<Code>4.5m</Code></StatusCell>
        <StatusCell $w={98}>底标高:<Code>4.45m</Code></StatusCell>
        <StatusCell $w={48}><Code>0</Code></StatusCell>
        <StatusCell $fill>名称在当前层当前构件类型下不允许重名</StatusCell>
        <StatusCell $w={70}><Code>156.6 FPS</Code></StatusCell>
      </StatusBar>

      <Taskbar>
        <StartBtn><WinLogo /></StartBtn>
        <TaskSearch>
          <Cortana />
          <TaskSearchText>在这里输入你要搜索的内容</TaskSearchText>
          <MicWrap><MicIc /></MicWrap>
        </TaskSearch>
        <TaskIconSlot $w={48}><TaskView /></TaskIconSlot>
        <TaskIconSlot $w={48} $ml={3}><FanIc /></TaskIconSlot>
        <IeBox><IeIc /><MagnGray /></IeBox>
        <TaskIconSlot $w={46} $ml={7}><SwirlIc /></TaskIconSlot>
        <TaskIconSlot $w={47} $ml={2} $act $bar><AppLogo s={23} /></TaskIconSlot>
        <TaskIconSlot $w={40} $ml={6} $bar><GIcon /></TaskIconSlot>
        <TaskIconSlot $w={40} $ml={9} $bar><NoteIc /></TaskIconSlot>
        <ScrollTiles><UpChev /><DownChev /></ScrollTiles>
        <TaskIconSlot $w={20} $ml={21}><PeopleIc /></TaskIconSlot>
        <CpuBlock>58%<br />CPU使用</CpuBlock>
        <TaskIconSlot $w={14}><Caret /></TaskIconSlot>
        <TaskIconSlot $w={16} $ml={10}><BatIc /></TaskIconSlot>
        <TaskIconSlot $w={15} $ml={9}><WifiIc /></TaskIconSlot>
        <TaskIconSlot $w={16} $ml={7}><SpeakerIc /></TaskIconSlot>
        <TaskIconSlot $w={22} $ml={8}><KbdIc /></TaskIconSlot>
        <TrayText $ml={10}>中</TrayText>
        <TaskIconSlot $w={16} $ml={13}><SougouSm /></TaskIconSlot>
        <Clock>19:18<br />2018/11/11</Clock>
        <NotifyWrap><NotifyIc /><NotifyBadge>1</NotifyBadge></NotifyWrap>
      </Taskbar>

      <ImeBar>
        <ImeLogo>
          <Svg w={28} h={28}>
            <rect x="2" y="2" width="24" height="24" rx="4" fill="#e8501e" transform="rotate(-12 14 14)" />
            <path d="M20 8H11a3 3 0 0 0 0 6h6a3 3 0 0 1 0 6H8" fill="none" stroke="#fff" strokeWidth="3.600" />
          </Svg>
        </ImeLogo>
        <ImeZh>中</ImeZh>
        <ImeDots>°,</ImeDots>
        <ImeSlot $w={24}><SmileIc /></ImeSlot>
        <ImeSlot $w={20}><ImeMic /></ImeSlot>
        <ImeSlot $w={24}><ImeKbd /></ImeSlot>
        <ImeSlot $w={21}><ImeUser /></ImeSlot>
        <ImeSlot $w={22}><ImeShirt /></ImeSlot>
        <ImeSlot $w={15}><ImeWrench /></ImeSlot>
      </ImeBar>

      <Dialog>
        <DialogTitle>截面编辑</DialogTitle>
        <TabRow>
          <DlgTab>截面</DlgTab>
          <DlgTab $on>配筋</DlgTab>
        </TabRow>
        <DlgPanel>
          <DlgTools>
            纵筋
            <Sep $ml={8} />
            <Tool $ml={6}>点</Tool>
            <Arrow $ml={7} />
            <MiniSelect>1A6<Arrow /></MiniSelect>
            <Sep $ml={4} />
            <BlueBtn $w={51} $ml={3}><PointerIc />选择</BlueBtn>
            <Tool $ml={5}>手动设置参考线</Tool>
            <Arrow $ml={6} />
            <Sep $ml={6} />
            <Tool $ml={6}><ElevIc />设置标高</Tool>
            <Tool $ml={8}><ShowDim />显示标注</Tool>
            <Tool $ml={8} $off>删除</Tool>
          </DlgTools>
          <DlgTools2 $w={160}>
            横筋
            <Sep $ml={8} />
            <Tool $ml={1}>钢筋类型:</Tool>
            <BlueBtn $ml={1}>水平</BlueBtn>
            <Tool $ml={5}>垂直</Tool>
          </DlgTools2>
          <Drawing />
          <SnapRow>
            <BlueBtn $w={50}><OrthoIc />正交</BlueBtn>
            <BlueBtn $w={76}><DynIc />动态输入</BlueBtn>
            <SnapGroup>
              <Tool><PerpIc />垂点</Tool>
              <Tool><MidIc />中点</Tool>
            </SnapGroup>
          </SnapRow>
        </DlgPanel>
        <DlgStatus>
          <DlgStatusCell $w={99}><Coord>(X: -151 Y: 205)</Coord></DlgStatusCell>
          <DlgStatusCell $grip>选择钢筋进行编辑，选择标注进行修改或移动;</DlgStatusCell>
        </DlgStatus>
      </Dialog>
    </Page>
  );
}
